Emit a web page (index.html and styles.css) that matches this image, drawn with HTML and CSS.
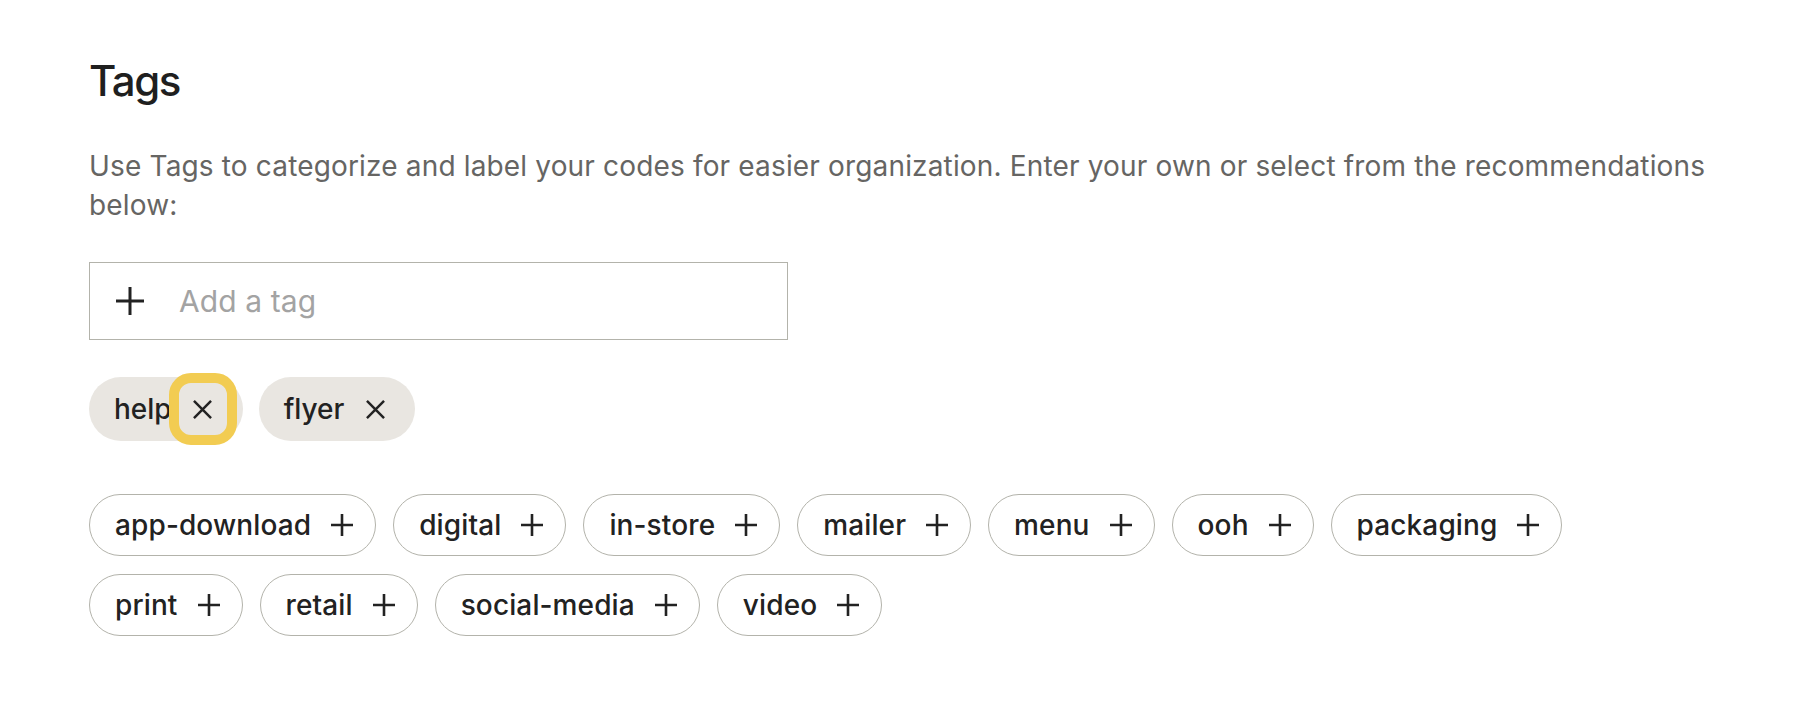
FILE: index.html
```html
<!DOCTYPE html>
<html lang="en">
<head>
<meta charset="utf-8">
<title>Tags</title>
<link rel="stylesheet" href="styles.css">
</head>
<body>
<section class="tags-panel">
  <h2 class="title">Tags</h2>
  <p class="desc">Use Tags to categorize and label your codes for easier organization. Enter your own or select from the recommendations below:</p>
  <label class="tag-input">
    <svg class="input-plus" viewBox="0 0 28 28" aria-hidden="true"><path d="M14 0v28M0 14h28"/></svg>
    <span class="placeholder">Add a tag</span>
  </label>
  <div class="selected">
    <span class="chip">help<button class="remove focused" aria-label="Remove help"><svg viewBox="0 0 20 20"><path d="M1 1l18 18M19 1L1 19"/></svg></button></span>
    <span class="chip">flyer<button class="remove" aria-label="Remove flyer"><svg viewBox="0 0 20 20"><path d="M1 1l18 18M19 1L1 19"/></svg></button></span>
  </div>
  <div class="suggestions">
    <button class="sugg">app-download<svg viewBox="0 0 22 22"><path d="M11 0v22M0 11h22"/></svg></button>
    <button class="sugg">digital<svg viewBox="0 0 22 22"><path d="M11 0v22M0 11h22"/></svg></button>
    <button class="sugg">in-store<svg viewBox="0 0 22 22"><path d="M11 0v22M0 11h22"/></svg></button>
    <button class="sugg">mailer<svg viewBox="0 0 22 22"><path d="M11 0v22M0 11h22"/></svg></button>
    <button class="sugg">menu<svg viewBox="0 0 22 22"><path d="M11 0v22M0 11h22"/></svg></button>
    <button class="sugg">ooh<svg viewBox="0 0 22 22"><path d="M11 0v22M0 11h22"/></svg></button>
    <button class="sugg">packaging<svg viewBox="0 0 22 22"><path d="M11 0v22M0 11h22"/></svg></button>
    <button class="sugg">print<svg viewBox="0 0 22 22"><path d="M11 0v22M0 11h22"/></svg></button>
    <button class="sugg">retail<svg viewBox="0 0 22 22"><path d="M11 0v22M0 11h22"/></svg></button>
    <button class="sugg">social-media<svg viewBox="0 0 22 22"><path d="M11 0v22M0 11h22"/></svg></button>
    <button class="sugg">video<svg viewBox="0 0 22 22"><path d="M11 0v22M0 11h22"/></svg></button>
  </div>
</section>
</body>
</html>
```
FILE: styles.css
```css
* { box-sizing: border-box; }
html, body { margin: 0; background: #ffffff; }
body {
  font-family: Inter, "Noto Sans", "Liberation Sans", sans-serif;
  color: #222222;
}
.tags-panel {
  width: 1750px;
  padding: 56px 0 0 89px;
}
.title {
  margin: 0;
  font-size: 42px;
  line-height: 50px;
  font-weight: 500;
  letter-spacing: -1.5px;
  color: #1f1f1f;
}
.desc {
  margin: 41px 0 0;
  width: 1670px;
  font-size: 28px;
  line-height: 38.5px;
  font-weight: 400;
  letter-spacing: 0.16px;
  color: #666563;
}
.tag-input {
  margin-top: 38px;
  width: 699px;
  height: 78px;
  border: 1.75px solid #b3b3ab;
  display: flex;
  align-items: center;
  padding-left: 26px;
}
.input-plus {
  width: 28px;
  height: 28px;
  stroke: #222;
  stroke-width: 3;
  fill: none;
  flex: none;
}
.placeholder {
  margin-left: 35px;
  font-size: 30px;
  letter-spacing: 0.1px;
  color: #a3a3a3;
}
.selected {
  margin-top: 37px;
  display: flex;
  gap: 16px;
}
.chip {
  height: 64px;
  border-radius: 32px;
  background: #e9e6e1;
  display: inline-flex;
  align-items: center;
  padding: 0 16px 0 25px;
  font-size: 28px;
  font-weight: 500;
  color: #222;
}
.remove {
  margin-left: 7px;
  width: 48px;
  height: 52px;
  border: 0;
  padding: 0;
  background: transparent;
  border-radius: 12px;
  display: flex;
  align-items: center;
  justify-content: center;
  cursor: pointer;
}
.remove.focused {
  outline: 10px solid #f2cc52;
}
.remove svg {
  width: 19px;
  height: 19px;
  stroke: #222;
  stroke-width: 2.6;
  fill: none;
}
.suggestions {
  margin-top: 53px;
  width: 1500px;
  display: flex;
  flex-wrap: wrap;
  gap: 18px 17px;
}
.sugg {
  height: 62px;
  border: 1.75px solid #b3b3ab;
  border-radius: 31px;
  background: #fff;
  display: inline-flex;
  align-items: center;
  padding: 0 22px 0 25px;
  font-family: inherit;
  font-size: 28px;
  font-weight: 500;
  letter-spacing: 0.12px;
  color: #222;
  cursor: pointer;
}
.sugg svg {
  width: 22px;
  height: 22px;
  margin-left: 20px;
  stroke: #222;
  stroke-width: 2.6;
  fill: none;
}
```
